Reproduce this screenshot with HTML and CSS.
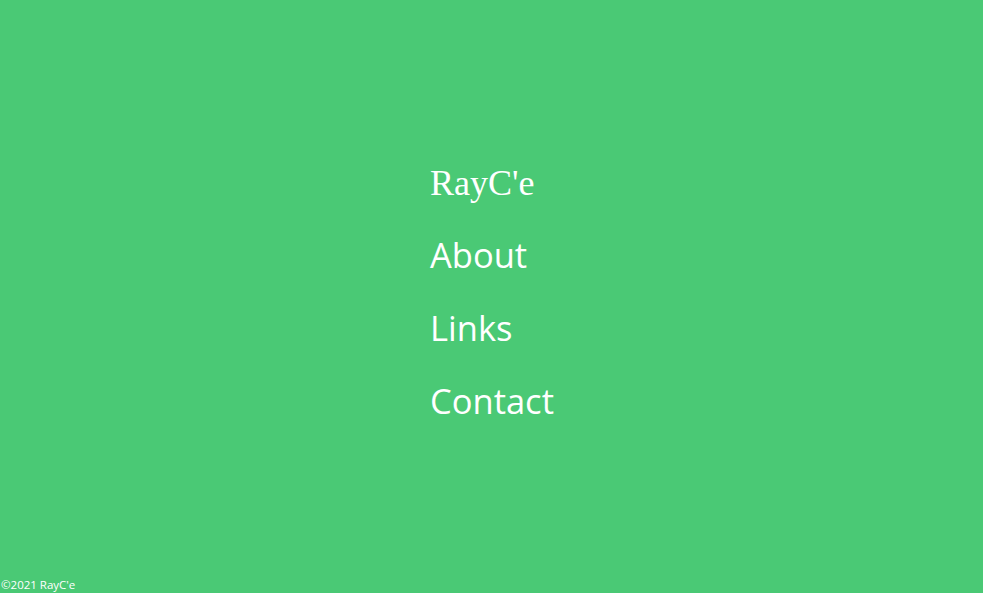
FILE: index.html
```html
<!DOCTYPE html>
<html>
<head>
<meta charset="utf-8">
<link rel="stylesheet" href="styles.css">
</head>
<body>
<main class="page">
  <nav class="menu">
    <div class="brand">RayC'e</div>
    <a class="item" href="#">About</a>
    <a class="item" href="#">Links</a>
    <a class="item" href="#">Contact</a>
  </nav>
</main>
<footer class="footer">©2021 RayC'e</footer>
</body>
</html>
```
FILE: styles.css
```css
html, body {
  margin: 0;
  padding: 0;
  height: 100%;
}
body {
  background: #4ac975;
  color: #ffffff;
  font-family: "Open Sans", "Noto Sans", sans-serif;
  position: relative;
  overflow: hidden;
}
.page {
  height: 100%;
  display: flex;
  justify-content: center;
  align-items: center;
}
.menu {
  display: flex;
  flex-direction: column;
  align-items: flex-start;
  margin-left: 77px;
  width: 200px;
  padding-bottom: 7px;
}
.brand {
  font-family: "Liberation Serif", serif;
  font-size: 36px;
  line-height: 40px;
  margin-bottom: 29px;
}
.item {
  color: #ffffff;
  text-decoration: none;
  font-size: 34.5px;
  line-height: 46px;
  margin-bottom: 27px;
}
.item:last-child {
  margin-bottom: 0;
}
.footer {
  position: absolute;
  left: 1px;
  bottom: 1px;
  font-size: 11.5px;
  line-height: 14px;
}
```
